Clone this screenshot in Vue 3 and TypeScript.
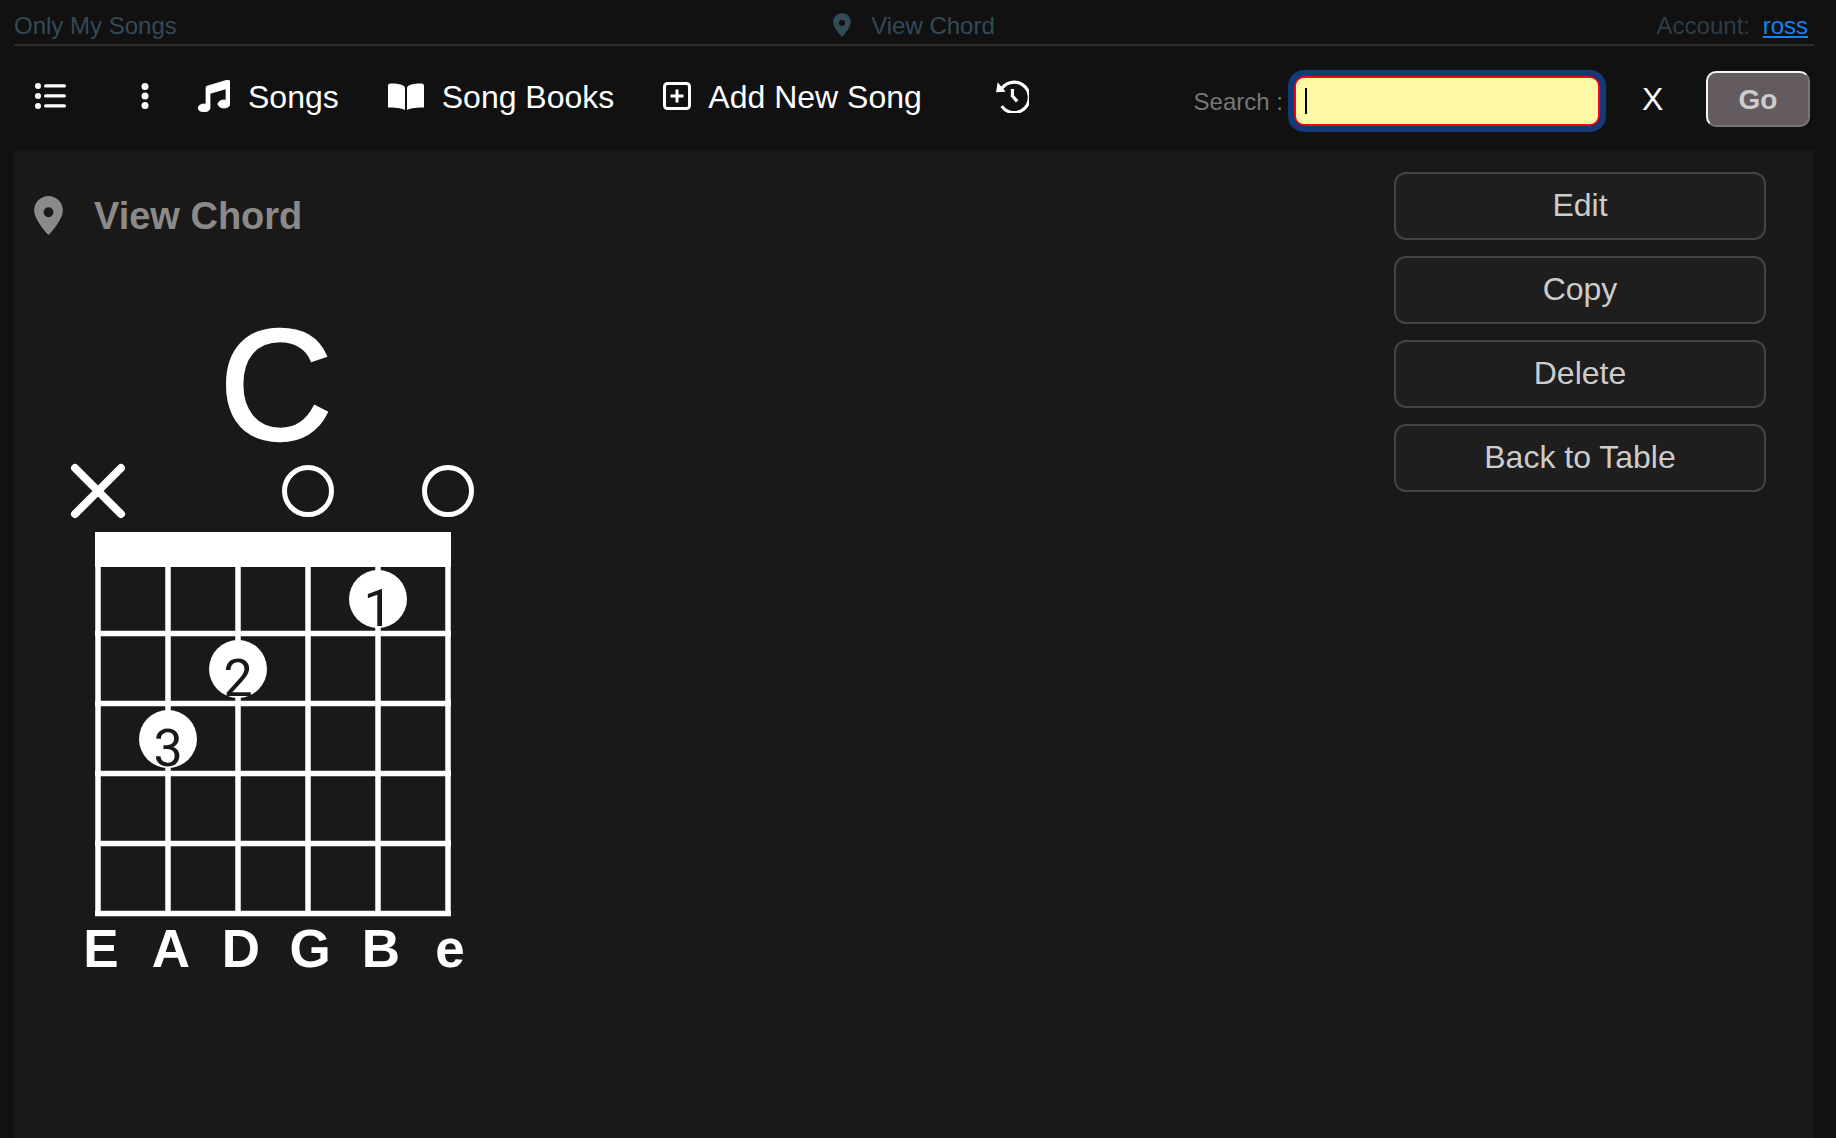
<script setup lang="ts">
const buttons: string[] = ['Edit', 'Copy', 'Delete', 'Back to Table']
const verticals: number[] = [98, 168, 238, 308, 378, 448]
const horizontals: number[] = [563, 633.5, 703.5, 773.5, 843.5, 913.5]
const dots = [
  { x: 378, y: 599, n: '1' },
  { x: 238, y: 669, n: '2' },
  { x: 168, y: 739, n: '3' },
]
const strings = [
  { x: 101, l: 'E' },
  { x: 171, l: 'A' },
  { x: 241, l: 'D' },
  { x: 310, l: 'G' },
  { x: 381, l: 'B' },
  { x: 450, l: 'e' },
]
const pin = 'M14 0C6.3 0 0 6.3 0 14c0 5 2.5 9 5.5 13.5C8.5 32 11 35 14 38c3-3 5.5-6 8.5-10.5C25.5 23 28 19 28 14 28 6.3 21.7 0 14 0zm0 20.6a4.8 4.8 0 1 1 0-9.6 4.8 4.8 0 0 1 0 9.6z'
</script>

<template>
  <div class="page">
    <header class="topbar">
      <span class="crumb">Only My Songs</span>
      <span class="crumb center">
        <svg class="pin-small" viewBox="0 0 28 38"><path :d="pin" /></svg>
        View Chord
      </span>
      <span class="crumb account">Account: <a class="user">ross</a></span>
    </header>

    <nav class="nav">
      <svg class="i-list" viewBox="0 0 31 26">
        <circle cx="3" cy="3" r="3" /><circle cx="3" cy="13" r="3" /><circle cx="3" cy="23" r="3" />
        <rect x="9" y="1.2" width="22" height="3.4" rx="1.7" />
        <rect x="9" y="11.2" width="22" height="3.4" rx="1.7" />
        <rect x="9" y="21.2" width="22" height="3.4" rx="1.7" />
      </svg>
      <svg class="i-dots" viewBox="0 0 8 26">
        <circle cx="4" cy="3.5" r="3.5" /><circle cx="4" cy="13" r="3.5" /><circle cx="4" cy="22.5" r="3.5" />
      </svg>
      <a class="link first">
        <svg class="i-music" viewBox="0 0 512 512"><path d="M511.99 32.01c0-21.71-21.1-37.01-41.6-30.51L150.4 96c-13.3 4.2-22.4 16.5-22.4 30.5v261.42c-10.05-2.38-20.72-3.92-32-3.92-53.02 0-96 28.65-96 64s42.98 64 96 64 96-28.65 96-64V214.31l256-75.02v184.63c-10.05-2.38-20.72-3.92-32-3.92-53.02 0-96 28.65-96 64s42.98 64 96 64 96-28.65 96-64l-.01-351.99z" /></svg>
        <span class="label">Songs</span>
      </a>
      <a class="link books">
        <svg class="i-book" viewBox="0 0 36 27"><path d="M0 3Q0 .5 2.5.5C8 .5 13 1 16 3q1 .8 1 2.2V27c-4-2-11-2.4-17-2.4zM36 3q0-2.5-2.5-2.5C28 .5 23 1 20 3q-1 .8-1 2.2V27c4-2 11-2.4 17-2.4z" /></svg>
        <span class="label">Song Books</span>
      </a>
      <a class="link add">
        <svg class="i-add" viewBox="0 0 28 28">
          <rect x="1.5" y="1.5" width="25" height="25" rx="3" />
          <path d="M14 7.5v13M7.5 14h13" />
        </svg>
        <span class="label">Add New Song</span>
      </a>
      <svg class="i-history" viewBox="-1 0 32 32">
        <path d="M1.5 3 0 12.5 9 12z" class="fill" />
        <path d="M4 11.3A14.3 14.3 0 1 1 5.3 25.5" />
        <path d="M15.4 9.5V16l4.5 5" />
      </svg>
      <div class="search">
        <label class="search-label">Search :</label>
        <div class="search-box"><span class="caret"></span></div>
        <span class="clear">X</span>
        <button class="go" type="button">Go</button>
      </div>
    </nav>

    <main class="content">
      <section class="chord-area">
        <h1 class="title">
          <svg class="pin-big" viewBox="0 0 28 38"><path :d="pin" /></svg>
          View Chord
        </h1>
        <svg class="chord" viewBox="60 280 420 710" width="420" height="710">
          <text x="276" y="439" text-anchor="middle" class="name">C</text>
          <path d="M75 468l46 46M121 468l-46 46" class="mute" />
          <circle cx="308" cy="491" r="23.5" class="open" />
          <circle cx="448" cy="491" r="23.5" class="open" />
          <rect x="95" y="532" width="356" height="35" class="solid" />
          <line v-for="x in verticals" :key="'v' + x" :x1="x" :x2="x" y1="560" y2="916" class="grid" />
          <line v-for="y in horizontals" :key="'h' + y" x1="95" x2="451" :y1="y" :y2="y" class="grid" />
          <g v-for="d in dots" :key="d.n">
            <circle :cx="d.x" :cy="d.y" r="29" class="solid" />
            <text :x="d.x" :y="d.y + 27" text-anchor="middle" class="finger">{{ d.n }}</text>
          </g>
          <text v-for="s in strings" :key="s.l" :x="s.x" y="967" text-anchor="middle" class="string">{{ s.l }}</text>
        </svg>
      </section>
      <aside class="actions">
        <button v-for="b in buttons" :key="b" class="action" type="button">{{ b }}</button>
      </aside>
    </main>
  </div>
</template>

<style>
html, body { margin: 0; background: #111111; }
</style>

<style scoped>
.page {
  height: 1138px;
  overflow: hidden;
  display: flex;
  flex-direction: column;
  padding: 0 22px 0 14px;
  background: #111111;
  font-family: "Liberation Sans", Arial, sans-serif;
}
.topbar {
  height: 46px;
  box-sizing: border-box;
  padding-top: 8px;
  flex: none;
  display: grid;
  grid-template-columns: 1fr auto 1fr;
  align-items: center;
  border-bottom: 2px solid #2c2c2c;
}
.crumb { font-size: 24px; color: #334a57; white-space: nowrap; line-height: 36px; }
.center { display: flex; align-items: center; }
.pin-small { width: 18px; height: 24px; fill: #334a57; margin: 0 20px 2px 0; }
.account { justify-self: end; padding-right: 6px; color: #2e3d47; }
.user { color: #1482f0; text-decoration: underline; margin-left: 6px; }
.nav {
  height: 104px;
  flex: none;
  display: flex;
  align-items: center;
  color: #fff;
  padding: 0 4px 0 21px;
  box-sizing: border-box;
}
svg { display: block; flex: none; }
.nav svg { fill: #fff; position: relative; top: -2px; }
.i-list { width: 31px; height: 26px; }
.i-dots { width: 8px; height: 26px; margin-left: 75px; }
.link { display: flex; align-items: center; font-size: 32px; color: #fff; white-space: nowrap; position: relative; top: -2px; }
.link svg { top: 0; }
.label { padding-top: 2px; }
.first { margin-left: 49px; }
.nav .i-music { width: 32px; height: 32px; margin-right: 18px; stroke: #fff; stroke-width: 12; }
.books { margin-left: 49px; }
.i-book { width: 36px; height: 27px; margin-right: 18px; }
.add { margin-left: 49px; }
.i-add { width: 28px; height: 28px; margin-right: 17px; }
.nav .i-add rect, .nav .i-add path { fill: none; stroke: #fff; stroke-width: 3; }
.i-history { width: 34px; height: 34px; margin-left: 73px; }
.nav .i-history { fill: none; stroke: #fff; stroke-width: 3; }
.nav .i-history .fill { fill: #fff; stroke: none; }
.search { margin-left: auto; display: flex; align-items: center; position: relative; top: 1px; }
.search-label { font-size: 24px; color: #777; margin-right: 11px; position: relative; top: 3px; }
.search-box {
  width: 306px;
  height: 50px;
  margin-top: 4px;
  box-sizing: border-box;
  background: #fdf9a5;
  border: 2px solid #f2001c;
  border-radius: 10px;
  outline: 6px solid #123a7a;
  outline-offset: 0;
  display: flex;
  align-items: center;
  padding-left: 9px;
  margin-right: 42px;
}
.caret { display: block; width: 2px; height: 26px; background: #000; }
.clear { font-size: 32px; color: #fff; width: 19px; margin-right: 45px; line-height: 1; }
.go {
  width: 104px;
  height: 56px;
  box-sizing: border-box;
  padding: 2px 0 0;
  font: bold 28px "Liberation Sans", Arial, sans-serif;
  color: #ccc;
  background: #635b60;
  border: 2px solid;
  border-color: #f4f4f4 #777 #777 #f4f4f4;
  border-radius: 10px;
}
.content {
  flex: 1;
  display: flex;
  justify-content: space-between;
  background: #1a1918;
  padding: 22px 48px 0 0;
}
.chord-area { width: 520px; }
.title {
  margin: 0;
  display: flex;
  align-items: center;
  font-size: 38px;
  line-height: 44px;
  font-weight: bold;
  color: #8a8a8a;
  padding: 22px 0 0 20px;
}
.pin-big { width: 29px; height: 39px; fill: #8a8a8a; margin: 0 31px 2px 0; }
.chord { filter: blur(0.6px); margin: 42px 0 0 46px; }
.name { font-size: 157px; fill: #fff; stroke: #fff; stroke-width: 2.5; }
.mute { stroke: #fff; stroke-width: 8; stroke-linecap: round; fill: none; }
.open { fill: none; stroke: #fff; stroke-width: 5; }
.solid { fill: #fff; }
.grid { stroke: #fff; stroke-width: 5.5; }
.finger { font-size: 52px; font-family: Roboto, "Liberation Sans", sans-serif; fill: #1a1918; }
.string { font-size: 53px; font-weight: bold; fill: #fff; }
.actions { width: 372px; display: flex; flex-direction: column; gap: 16px; }
.action {
  height: 68px;
  box-sizing: border-box;
  background: #1e1e1e;
  border: 2px solid #444;
  border-radius: 12px;
  color: #ccc;
  font: 32px "Liberation Sans", Arial, sans-serif;
  padding: 0 0 2px;
}
</style>
